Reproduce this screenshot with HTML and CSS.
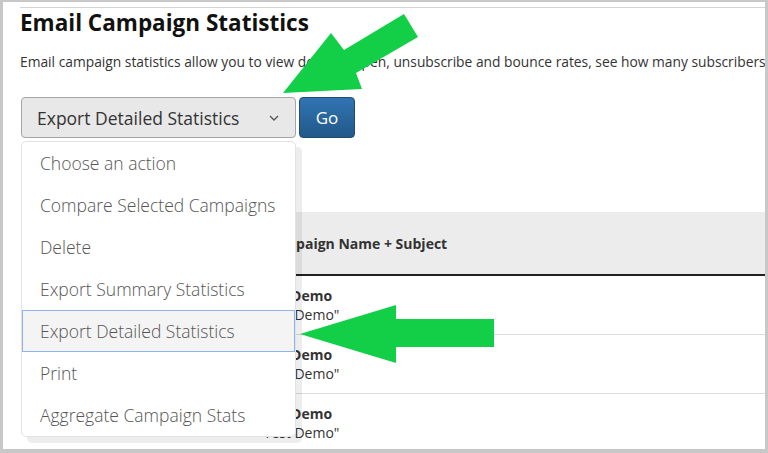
FILE: index.html
```html
<!DOCTYPE html>
<html lang="en">
<head>
    <meta charset="UTF-8">
    <meta name="viewport" content="width=device-width, initial-scale=1.0">
    <title>Email Campaign Statistics</title>
    <link rel="stylesheet" href="styles.css">
</head>
<body>
    <div class="frame">
        <div class="page">
            <h1 class="title">Email Campaign Statistics</h1>
            <p class="intro">Email campaign statistics allow you to view detailed open, unsubscribe and bounce rates, see how many subscribers clicked links in your campaigns and more.</p>

            <div class="actions">
                <div class="picker">
                    <div class="select">
                        <span>Export Detailed Statistics</span>
                        <svg class="chevron" width="10" height="6" viewBox="0 0 10 6"><path d="M1 1 L5 5 L9 1" fill="none" stroke="#555" stroke-width="1.3"/></svg>
                    </div>
                    <ul class="menu">
                        <li>Choose an action</li>
                        <li>Compare Selected Campaigns</li>
                        <li>Delete</li>
                        <li>Export Summary Statistics</li>
                        <li class="active">Export Detailed Statistics</li>
                        <li>Print</li>
                        <li>Aggregate Campaign Stats</li>
                    </ul>
                </div>
                <button class="go">Go</button>
            </div>

            <table class="stats">
                <thead>
                    <tr>
                        <th class="col-check"></th>
                        <th>Campaign Name + Subject</th>
                    </tr>
                </thead>
                <tbody>
                    <tr>
                        <td class="col-check"></td>
                        <td><strong>Test Demo</strong><br>"Test Demo"</td>
                    </tr>
                    <tr>
                        <td class="col-check"></td>
                        <td><strong>Test Demo</strong><br>"Test Demo"</td>
                    </tr>
                    <tr>
                        <td class="col-check"></td>
                        <td><strong>Test Demo</strong><br>"Test Demo"</td>
                    </tr>
                </tbody>
            </table>
        </div>

        <!-- callout arrows -->
        <svg class="arrows" width="768" height="453" viewBox="0 0 768 453">
            <polygon points="283,93 331,33 344,50 404,14 418,37 356,73 362,89" fill="#13cf48"/>
            <polygon points="300,334 396,305 396,319 494,319 494,347 396,347 396,363" fill="#13cf48"/>
        </svg>
    </div>
</body>
</html>
```

FILE: styles.css
```css
body {
    margin: 0;
    background: #c8c8c8;
    font-family: "Open Sans", "Liberation Sans", sans-serif;
    color: #333;
}
.frame {
    position: relative;
    margin: 2px 3px 0 3px;
    height: 447px;
    background: white;
    overflow: hidden;
}
.page {
    margin: 5px 0 0 17px;
    border-top: 1px solid #d2d2d2;
}
.title {
    margin: 0;
    font-size: 22.5px;
    line-height: 30px;
    font-weight: 700;
    color: #111;
}
.intro {
    margin: 15px 0 0;
    font-size: 13.8px;
    line-height: 18px;
    white-space: nowrap;
    color: #333;
}
.actions {
    display: flex;
    gap: 3px;
    margin: 26px 0 0 1px;
}
.picker {
    position: relative;
}
.select {
    box-sizing: border-box;
    width: 275px;
    height: 41px;
    padding: 0 16px 0 15px;
    display: flex;
    align-items: center;
    justify-content: space-between;
    background: #e8e8e8;
    border: 1px solid #a5a5a5;
    border-radius: 4px;
    font-size: 17.5px;
    color: #333;
}
.menu {
    position: absolute;
    top: 44px;
    left: 0;
    z-index: 2;
    box-sizing: border-box;
    width: 275px;
    margin: 0;
    padding: 0;
    list-style: none;
    background: white;
    border: 1px solid #e2e2e2;
    border-radius: 5px;
    box-shadow: 6px 6px 0 rgba(0,0,0,0.07);
}
.menu li {
    height: 42px;
    box-sizing: border-box;
    padding-left: 17px;
    line-height: 40px;
    border: 1px solid transparent;
    font-size: 17.5px;
    font-weight: 300;
    color: #555;
}
.menu li.active {
    background: #f4f4f4;
    border-color: #8cb2f0;
}
.go {
    box-sizing: border-box;
    width: 56px;
    height: 41px;
    padding: 0;
    background: linear-gradient(#3174b3, #215888);
    border: 1px solid #1f4c77;
    border-radius: 4px;
    color: white;
    font-family: inherit;
    font-size: 17px;
    font-weight: 500;
}
.stats {
    margin: 74px 0 0 1px;
    width: calc(100% - 1px);
    border-collapse: collapse;
    font-size: 14px;
    line-height: 19px;
}
.stats th {
    height: 62px;
    padding: 0 0 0 7px;
    background: #ececec;
    border-bottom: 2px solid #222;
    text-align: left;
    font-weight: 700;
}
.stats td {
    height: 58px;
    box-sizing: border-box;
    padding: 10px 0;
    border-bottom: 1px solid #dcdcdc;
    vertical-align: top;
}
.stats .col-check {
    width: 237px;
    padding: 0;
}
.arrows {
    position: absolute;
    top: -2px;
    left: -3px;
    z-index: 3;
    pointer-events: none;
}
```
